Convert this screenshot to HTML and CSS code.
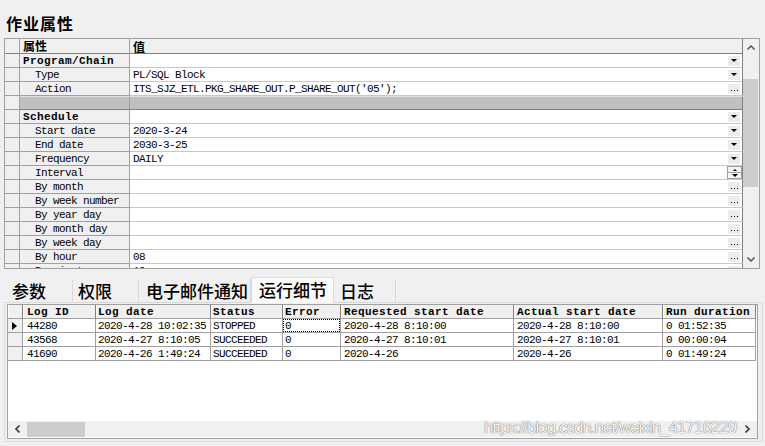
FILE: index.html
```html
<!DOCTYPE html>
<html lang="zh">
  <head>
    <meta charset="UTF-8" />
    <title>作业属性</title>
    <link rel="stylesheet" href="styles.css">
  </head>
  <body>
    <div class="title">作业属性</div>

    <!-- 属性表 -->
    <div class="props">
      <div class="props-body">
        <div class="prow head">
          <div class="ind"></div>
          <div class="pname cn">属性</div>
          <div class="pval cn">值</div>
        </div>
        <div class="prow">
          <div class="ind"></div>
          <div class="pname group">Program/Chain</div>
          <div class="pval"><span></span><i class="dd"></i></div>
        </div>
        <div class="prow">
          <div class="ind"></div>
          <div class="pname">Type</div>
          <div class="pval"><span>PL/SQL Block</span><i class="dd"></i></div>
        </div>
        <div class="prow">
          <div class="ind"></div>
          <div class="pname">Action</div>
          <div class="pval"><span>ITS_SJZ_ETL.PKG_SHARE_OUT.P_SHARE_OUT('05');</span><i class="dots"></i></div>
        </div>
        <div class="prow sep">
          <div class="ind"></div>
          <div class="pname"></div>
          <div class="pval"></div>
        </div>
        <div class="prow">
          <div class="ind"></div>
          <div class="pname group">Schedule</div>
          <div class="pval"><span></span><i class="dd"></i></div>
        </div>
        <div class="prow">
          <div class="ind"></div>
          <div class="pname">Start date</div>
          <div class="pval"><span>2020-3-24</span><i class="dd"></i></div>
        </div>
        <div class="prow">
          <div class="ind"></div>
          <div class="pname">End date</div>
          <div class="pval"><span>2030-3-25</span><i class="dd"></i></div>
        </div>
        <div class="prow">
          <div class="ind"></div>
          <div class="pname">Frequency</div>
          <div class="pval"><span>DAILY</span><i class="dd"></i></div>
        </div>
        <div class="prow">
          <div class="ind"></div>
          <div class="pname">Interval</div>
          <div class="pval"><span></span><i class="spin"><b class="up"></b><b class="down"></b></i></div>
        </div>
        <div class="prow">
          <div class="ind"></div>
          <div class="pname">By month</div>
          <div class="pval"><span></span><i class="dots"></i></div>
        </div>
        <div class="prow">
          <div class="ind"></div>
          <div class="pname">By week number</div>
          <div class="pval"><span></span><i class="dots"></i></div>
        </div>
        <div class="prow">
          <div class="ind"></div>
          <div class="pname">By year day</div>
          <div class="pval"><span></span><i class="dots"></i></div>
        </div>
        <div class="prow">
          <div class="ind"></div>
          <div class="pname">By month day</div>
          <div class="pval"><span></span><i class="dots"></i></div>
        </div>
        <div class="prow">
          <div class="ind"></div>
          <div class="pname">By week day</div>
          <div class="pval"><span></span><i class="dots"></i></div>
        </div>
        <div class="prow">
          <div class="ind"></div>
          <div class="pname">By hour</div>
          <div class="pval"><span>08</span><i class="dots"></i></div>
        </div>
        <div class="prow">
          <div class="ind"></div>
          <div class="pname">By minute</div>
          <div class="pval"><span>10</span><i class="dots"></i></div>
        </div>
      </div>
      <div class="vscroll">
        <div class="arrow"><svg width="8" height="5" viewBox="0 0 8 5"><path d="M0.5 4.5 L4 1 L7.5 4.5" fill="none" stroke="#606060" stroke-width="1.6"/></svg></div>
        <div class="track"><div class="thumb"></div></div>
        <div class="arrow"><svg width="8" height="5" viewBox="0 0 8 5"><path d="M0.5 0.5 L4 4 L7.5 0.5" fill="none" stroke="#606060" stroke-width="1.6"/></svg></div>
      </div>
    </div>

    <!-- 选项卡 -->
    <div class="tabs">
      <div class="tab t1">参数</div>
      <div class="tab t2">权限</div>
      <div class="tab t3">电子邮件通知</div>
      <div class="tab t4 on">运行细节</div>
      <div class="tab t5">日志</div>
    </div>

    <div class="panel">
      <div class="log">
        <div class="lrow lhead">
          <div class="ind"></div>
          <div class="c-id">Log ID</div>
          <div>Log date</div>
          <div>Status</div>
          <div>Error</div>
          <div class="pad3">Requested start date</div>
          <div class="pad3">Actual start date</div>
          <div class="pad3">Run duration</div>
        </div>
        <div class="lrow">
          <div class="ind"><i class="cur"></i></div>
          <div class="c-id">44280</div>
          <div>2020-4-28 10:02:35</div>
          <div>STOPPED</div>
          <div class="focus"><span>0</span></div>
          <div class="pad3">2020-4-28 8:10:00</div>
          <div class="pad3">2020-4-28 8:10:00</div>
          <div class="pad3">0 01:52:35</div>
        </div>
        <div class="lrow">
          <div class="ind"></div>
          <div class="c-id">43568</div>
          <div>2020-4-27 8:10:05</div>
          <div>SUCCEEDED</div>
          <div>0</div>
          <div class="pad3">2020-4-27 8:10:01</div>
          <div class="pad3">2020-4-27 8:10:01</div>
          <div class="pad3">0 00:00:04</div>
        </div>
        <div class="lrow">
          <div class="ind"></div>
          <div class="c-id">41690</div>
          <div>2020-4-26 1:49:24</div>
          <div>SUCCEEDED</div>
          <div>0</div>
          <div class="pad3">2020-4-26</div>
          <div class="pad3">2020-4-26</div>
          <div class="pad3">0 01:49:24</div>
        </div>
        <div class="log-fill"></div>
        <div class="hscroll">
          <div class="arrow"><svg width="5" height="8" viewBox="0 0 5 8"><path d="M4.5 0.5 L1 4 L4.5 7.5" fill="none" stroke="#404040" stroke-width="1.6"/></svg></div>
          <div class="hthumb"></div>
          <div class="htrack"></div>
          <div class="arrow"><svg width="5" height="8" viewBox="0 0 5 8"><path d="M0.5 0.5 L4 4 L0.5 7.5" fill="none" stroke="#404040" stroke-width="1.6"/></svg></div>
          <span class="mark">https://blog.csdn.net/weixin_41716229</span>
        </div>
      </div>
    </div>
  </body>
</html>
```

FILE: styles.css
```css
* {
  margin: 0;
  padding: 0;
  box-sizing: border-box;
}

body {
  width: 765px;
  height: 446px;
  overflow: hidden;
  background: #f0f0f0;
  color: #000;
  font-family: "Liberation Mono", "DejaVu Sans Mono", monospace;
  font-size: 11px;
  letter-spacing: -0.6px;
}

.title {
  height: 38px;
  padding: 13px 0 0 6px;
  font: bold 16px/20px "Noto Sans CJK SC", sans-serif;
  letter-spacing: 1px;
}

/* 属性表 */
.props {
  display: flex;
  margin-left: 4px;
  width: 756px;
  height: 231px;
  border: 1px solid #a0a0a0;
  background: #fff;
}

.props-body {
  flex: 1;
  overflow: hidden;
}

.prow {
  display: grid;
  grid-template-columns: 15px 110px 1fr;
  height: 14px;
}

.prow > div {
  height: 14px;
  padding-top: 1px;
  line-height: 13px;
  white-space: nowrap;
  overflow: hidden;
  border-right: 1px solid #a0a0a0;
  border-bottom: 1px solid #c8c8c8;
}

.prow .ind {
  background: #f0f0f0;
  border-bottom-color: #a0a0a0;
}

.prow .pname {
  padding-left: 15px;
  background: #f0f0f0;
  border-bottom-color: #a0a0a0;
}

.prow .pname.group {
  padding-left: 3px;
  font-weight: bold;
  letter-spacing: 0.4px;
}

.prow .pval {
  display: flex;
  align-items: center;
  justify-content: space-between;
  padding-top: 0;
  padding-left: 3px;
  border-right-color: #808080;
}

.prow .pval span {
  padding-top: 2px;
}

.prow.head,
.prow.head > div {
  height: 15px;
}

.prow.head > div {
  padding-top: 0;
  background: #f0f0f0;
  border-bottom-color: #808080;
}

.prow.head .pname,
.prow.head .pval {
  padding-left: 3px;
  overflow: visible;
}

.cn {
  font: bold 12px/14px "Noto Sans CJK SC", sans-serif;
  letter-spacing: 0;
}

.prow.sep .pname,
.prow.sep .pval {
  background: #c0c0c0;
  border-top: 1px solid #e0e0e0;
  border-bottom-color: #808080;
}

.dd,
.dots {
  display: flex;
  align-items: center;
  justify-content: center;
  width: 12px;
  height: 10px;
  margin-right: 2px;
  background: #ececec;
}

.dd::before {
  content: "";
  border-left: 3px solid transparent;
  border-right: 3px solid transparent;
  border-top: 3px solid #000;
}

.dots::before {
  content: "";
  width: 1px;
  height: 1px;
  background: #000;
  box-shadow: -3px 0 #000, 3px 0 #000;
  margin-top: 3px;
}

.spin {
  display: flex;
  flex-direction: column;
  width: 15px;
  height: 13px;
  border: 1px solid #a0a0a0;
  background: #f4f4f4;
}

.spin b {
  flex: 1;
  display: flex;
  align-items: center;
  justify-content: center;
}

.spin b.up {
  border-bottom: 1px solid #a0a0a0;
}

.spin b.up::before {
  content: "";
  border-left: 2px solid transparent;
  border-right: 2px solid transparent;
  border-bottom: 2px solid #000;
}

.spin b.down::before {
  content: "";
  border-left: 3px solid transparent;
  border-right: 3px solid transparent;
  border-top: 3px solid #000;
}

.vscroll {
  display: flex;
  flex-direction: column;
  width: 16px;
  background: #f0f0f0;
}

.vscroll .arrow {
  height: 17px;
  display: flex;
  align-items: center;
  justify-content: center;
}

.vscroll .track {
  flex: 1;
  padding-top: 23px;
}

.vscroll .thumb {
  width: 15px;
  height: 108px;
  background: #cdcdcd;
}

/* 选项卡 */
.tabs {
  display: flex;
  align-items: flex-end;
  margin: 7px 0 0 4px;
  height: 26px;
  font: 500 17px/21px "Noto Sans CJK SC", sans-serif;
  letter-spacing: 0;
}

.tab {
  height: 23px;
  padding: 1px 0 0 7px;
  border-right: 1px solid #d9d9d9;
  white-space: nowrap;
}

.tab.on {
  height: 26px;
  padding-top: 1px;
  margin-bottom: -1px;
  background: #fafafa;
  border: 1px solid #d9d9d9;
  border-bottom: none;
  position: relative;
}

.t1 { width: 69px; padding-left: 8px; }
.t2 { width: 66px; padding-left: 5px; }
.t3 { width: 112px; }
.t4 { width: 83px; }
.t5 { width: 62px; padding-left: 6px; }

.panel {
  margin-left: 4px;
  width: 759px;
  height: 140px;
  padding: 1px 0 2px 2px;
  border: 1px solid #d9d9d9;
}

/* 运行日志表 */
.log {
  display: flex;
  flex-direction: column;
  width: 751px;
  height: 135px;
  border: 1px solid #a0a0a0;
  background: #fff;
}

.lrow {
  display: grid;
  grid-template-columns: 15px 73px 115px 72px 58px 173px 149px 93px;
  height: 14px;
}

.lrow > div {
  height: 14px;
  padding-top: 1px;
  padding-left: 2px;
  line-height: 13px;
  white-space: nowrap;
  overflow: hidden;
  border-right: 1px solid #a0a0a0;
  border-bottom: 1px solid #a0a0a0;
}

.lrow .c-id {
  padding-left: 4px;
}

.lrow .pad3 {
  padding-left: 3px;
}

.lrow .ind {
  display: flex;
  align-items: center;
  padding: 0 0 0 4px;
  background: #f0f0f0;
}

.lhead > div {
  background: #f0f0f0;
  font-weight: bold;
  letter-spacing: 0.4px;
  box-shadow: inset 1px 0 #fff;
  border-right-color: #808080;
}

.cur {
  border-top: 4px solid transparent;
  border-bottom: 4px solid transparent;
  border-left: 5px solid #000;
}

.lrow .focus {
  padding: 0;
}

.lrow .focus span {
  display: block;
  height: 13px;
  padding: 1px 0 0 1px;
  line-height: 11px;
  border: 1px dotted #000;
}

.log-fill {
  flex: 1;
}

.hscroll {
  display: flex;
  align-items: center;
  height: 16px;
  margin-bottom: 1px;
  background: #f0f0f0;
  position: relative;
}

.hscroll .arrow {
  width: 19px;
  height: 16px;
  display: flex;
  align-items: center;
  justify-content: center;
}

.hthumb {
  width: 58px;
  height: 15px;
  background: #cdcdcd;
}

.htrack {
  flex: 1;
}

.mark {
  position: absolute;
  left: 476px;
  top: -3px;
  font: 17px/20px "Liberation Sans", sans-serif;
  letter-spacing: -1px;
  color: rgba(255, 255, 255, 0.95);
  text-shadow: 0 0 1px rgba(0, 0, 0, 0.55), 0 0 1px rgba(0, 0, 0, 0.3);
}
```
